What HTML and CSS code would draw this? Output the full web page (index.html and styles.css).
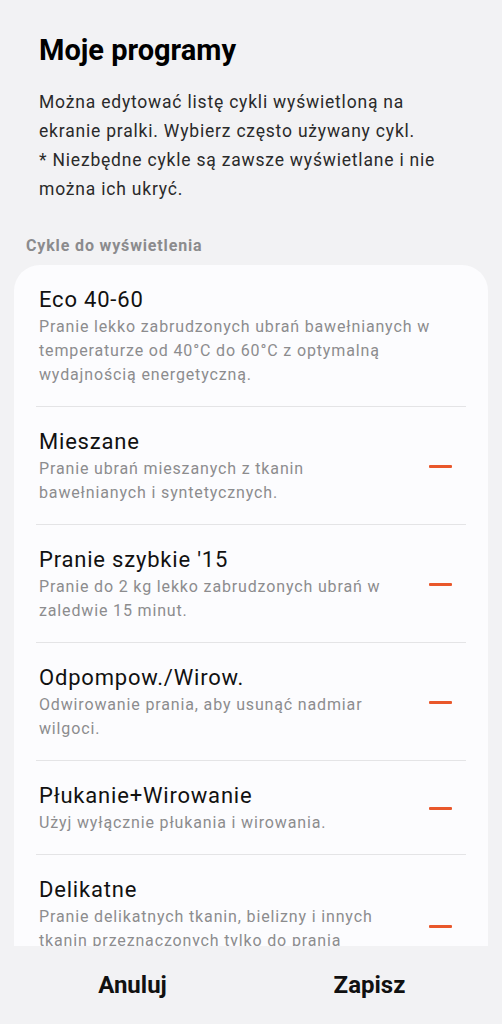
FILE: index.html
```html
<!DOCTYPE html>
<html lang="pl">
<head>
  <meta charset="UTF-8">
  <meta name="viewport" content="width=device-width, initial-scale=1.0">
  <title>Moje programy</title>
  <link rel="stylesheet" href="styles.css">
</head>
<body>
  <div class="screen">
    <div class="header">
      <h1>Moje programy</h1>
      <p class="intro">Można edytować listę cykli wyświetloną na ekranie pralki. Wybierz często używany cykl.<br>* Niezbędne cykle są zawsze wyświetlane i nie można ich ukryć.</p>
    </div>

    <div class="section-label">Cykle do wyświetlenia</div>

    <!-- Cycle list -->
    <div class="card">
      <div class="cycle">
        <div class="cycle-text">
          <h3>Eco 40-60</h3>
          <p>Pranie lekko zabrudzonych ubrań bawełnianych w temperaturze od 40°C do 60°C z optymalną wydajnością energetyczną.</p>
        </div>
      </div>

      <div class="cycle">
        <div class="cycle-text">
          <h3>Mieszane</h3>
          <p>Pranie ubrań mieszanych z tkanin bawełnianych i syntetycznych.</p>
        </div>
        <button class="remove" aria-label="Usuń"></button>
      </div>

      <div class="cycle">
        <div class="cycle-text">
          <h3>Pranie szybkie '15</h3>
          <p>Pranie do 2 kg lekko zabrudzonych ubrań w zaledwie 15 minut.</p>
        </div>
        <button class="remove" aria-label="Usuń"></button>
      </div>

      <div class="cycle">
        <div class="cycle-text">
          <h3>Odpompow./Wirow.</h3>
          <p>Odwirowanie prania, aby usunąć nadmiar wilgoci.</p>
        </div>
        <button class="remove" aria-label="Usuń"></button>
      </div>

      <div class="cycle">
        <div class="cycle-text">
          <h3>Płukanie+Wirowanie</h3>
          <p>Użyj wyłącznie płukania i wirowania.</p>
        </div>
        <button class="remove" aria-label="Usuń"></button>
      </div>

      <div class="cycle">
        <div class="cycle-text">
          <h3>Delikatne</h3>
          <p>Pranie delikatnych tkanin, bielizny i innych tkanin przeznaczonych tylko do prania ręcznego.</p>
        </div>
        <button class="remove" aria-label="Usuń"></button>
      </div>
    </div>

    <div class="footer">
      <button class="action">Anuluj</button>
      <button class="action">Zapisz</button>
    </div>
  </div>
</body>
</html>
```

FILE: styles.css
```css
body {
  font-family: Roboto, "Noto Sans", sans-serif;
  margin: 0;
  padding: 0;
  background-color: #f2f2f4;
  color: #111;
}

.screen {
  display: flex;
  flex-direction: column;
  height: 1024px;
  overflow: hidden;
}

.header {
  padding: 32px 40px 0 39px;
}

.header h1 {
  margin: 0;
  font-size: 29px;
  font-weight: 700;
  line-height: 36px;
  color: #000;
}

.intro {
  margin: 20px 0 0;
  font-size: 17.5px;
  letter-spacing: 0.8px;
  line-height: 29px;
  color: #2a2a2a;
}

.section-label {
  margin-top: 31px;
  padding-left: 26px;
  font-size: 16px;
  font-weight: 700;
  letter-spacing: 0.85px;
  line-height: 22px;
  color: #8b8b8d;
}

.card {
  flex: 1;
  margin: 8px 14px 0;
  background: #fcfcfe;
  border-radius: 26px 26px 0 0;
  overflow: hidden;
}

.cycle {
  display: flex;
  align-items: center;
  margin: 0 22px;
  padding: 20px 0 19px;
  border-bottom: 1px solid #e4e4e6;
}

.cycle-text {
  flex: 1;
  padding-left: 3px;
}

.cycle h3 {
  margin: 0;
  font-size: 22px;
  font-weight: 400;
  letter-spacing: 0.8px;
  line-height: 30px;
  color: #111;
}

.cycle p {
  margin: 0;
  font-size: 16px;
  letter-spacing: 0.85px;
  line-height: 24px;
  color: #8c8c8e;
}

.remove {
  flex: none;
  width: 23px;
  height: 3px;
  margin: 0 14px 0 24px;
  padding: 0;
  border: none;
  border-radius: 1px;
  background-color: #e9572b;
}

.footer {
  display: flex;
  height: 78px;
  padding: 0 14px;
}

.action {
  flex: 1;
  border: none;
  background: none;
  font-family: inherit;
  font-size: 24px;
  font-weight: 700;
  color: #111;
}
```
